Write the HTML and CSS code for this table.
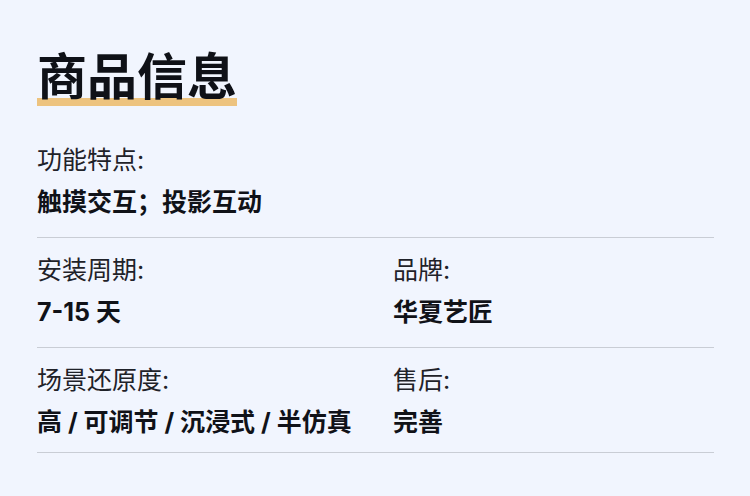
FILE: index.html
```html
<!DOCTYPE html>
<html lang="zh-CN">
<head>
<meta charset="utf-8">
<link rel="stylesheet" href="styles.css">
</head>
<body>
<main class="panel">
  <h1 class="title"><span class="title-text">商品信息</span></h1>
  <section class="rows">
    <div class="row">
      <div class="field">
        <div class="label">功能特点:</div>
        <div class="value">触摸交互；投影互动</div>
      </div>
    </div>
    <div class="row two">
      <div class="field">
        <div class="label">安装周期:</div>
        <div class="value">7-15 天</div>
      </div>
      <div class="field">
        <div class="label">品牌:</div>
        <div class="value">华夏艺匠</div>
      </div>
    </div>
    <div class="row two last">
      <div class="field">
        <div class="label">场景还原度:</div>
        <div class="value">高 / 可调节 / 沉浸式 / 半仿真</div>
      </div>
      <div class="field">
        <div class="label">售后:</div>
        <div class="value">完善</div>
      </div>
    </div>
  </section>
</main>
</body>
</html>
```

FILE: styles.css
```css
html, body {
  margin: 0;
  padding: 0;
  background: #f1f5fe;
}
body {
  font-family: "Inter", "Noto Sans CJK SC", sans-serif;
  color: #16181d;
}
.panel {
  padding: 44px 36px 0 37px;
}
.title {
  margin: 0;
  font-size: 50px;
  line-height: 66px;
  font-weight: 700;
  color: #0f1117;
}
.title-text {
  text-decoration: underline;
  text-decoration-color: #edc37f;
  text-decoration-thickness: 8px;
  text-underline-offset: 3px;
  text-decoration-skip-ink: auto;
}
.rows {
  margin-top: 35px;
}
.row {
  border-bottom: 1px solid #c9cdd5;
  padding: 0 0 20px;
}
.row + .row {
  padding-top: 17px;
}
.row.two {
  display: grid;
  grid-template-columns: 356px 1fr;
}
.row.last {
  padding-bottom: 15px;
}
.label {
  font-size: 25px;
  line-height: 30px;
  color: #1f2229;
}
.value {
  margin-top: 12px;
  font-size: 25px;
  line-height: 30px;
  font-weight: 700;
  color: #101218;
}
```
